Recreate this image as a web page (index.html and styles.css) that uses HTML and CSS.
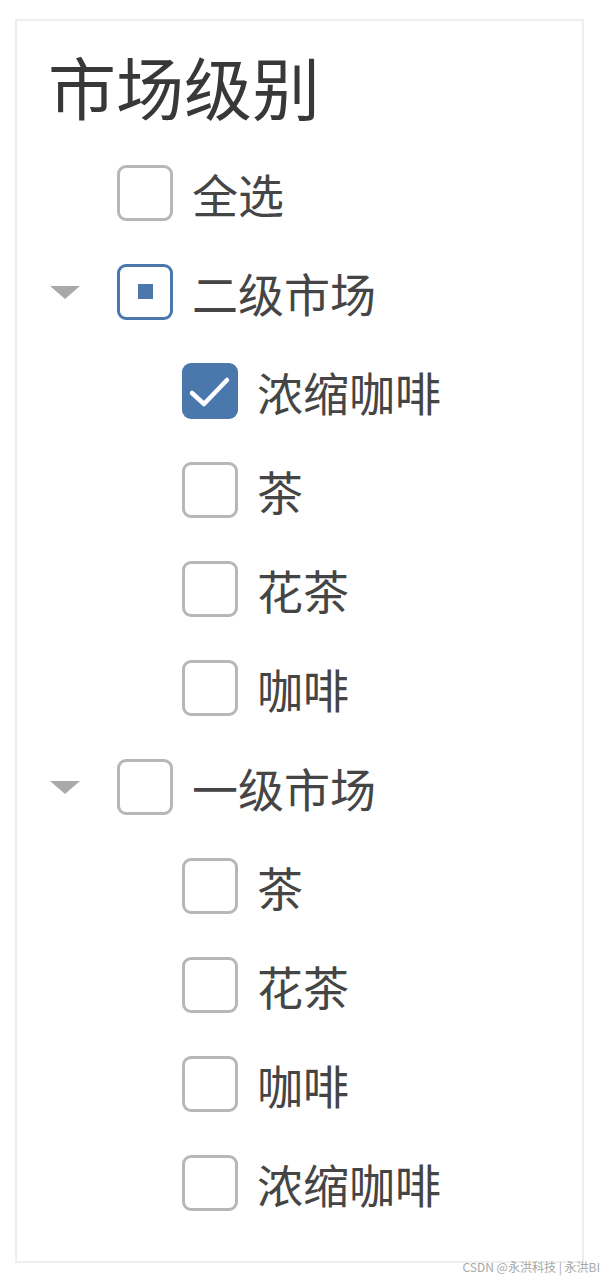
FILE: index.html
```html
<!DOCTYPE html>
<html lang="zh-CN">
<head>
<meta charset="utf-8">
<title>市场级别</title>
<link rel="stylesheet" href="styles.css">
</head>
<body>
<div class="panel">
  <div class="title">市场级别</div>
  <ul class="tree">
    <li class="row">
      <span class="toggle"></span>
      <span class="box"></span>
      <span class="label">全选</span>
    </li>
    <li class="row">
      <span class="toggle"><svg width="34" height="16" viewBox="0 0 34 16"><polygon points="2,2 32,2 17,15" fill="#a9a9a9"/></svg></span>
      <span class="box partial"><span class="dot"></span></span>
      <span class="label">二级市场</span>
    </li>
    <li class="row child">
      <span class="box checked"><svg width="56" height="56" viewBox="0 0 56 56"><polyline points="10,30 22,41 45,17" fill="none" stroke="#fff" stroke-width="4.5" stroke-linecap="round" stroke-linejoin="round"/></svg></span>
      <span class="label">浓缩咖啡</span>
    </li>
    <li class="row child">
      <span class="box"></span>
      <span class="label">茶</span>
    </li>
    <li class="row child">
      <span class="box"></span>
      <span class="label">花茶</span>
    </li>
    <li class="row child">
      <span class="box"></span>
      <span class="label">咖啡</span>
    </li>
    <li class="row">
      <span class="toggle"><svg width="34" height="16" viewBox="0 0 34 16"><polygon points="2,2 32,2 17,15" fill="#a9a9a9"/></svg></span>
      <span class="box"></span>
      <span class="label">一级市场</span>
    </li>
    <li class="row child">
      <span class="box"></span>
      <span class="label">茶</span>
    </li>
    <li class="row child">
      <span class="box"></span>
      <span class="label">花茶</span>
    </li>
    <li class="row child">
      <span class="box"></span>
      <span class="label">咖啡</span>
    </li>
    <li class="row child">
      <span class="box"></span>
      <span class="label">浓缩咖啡</span>
    </li>
  </ul>
</div>
<div class="watermark">CSDN @永洪科技 | 永洪BI</div>
</body>
</html>
```

FILE: styles.css
```css
html, body {
  margin: 0;
  padding: 0;
  background: #ffffff;
}

body {
  position: relative;
  width: 606px;
  height: 1280px;
  font-family: "Noto Sans CJK SC", "Noto Sans", sans-serif;
  color: #444444;
}

.panel {
  box-sizing: border-box;
  margin: 19px 0 0 15px;
  width: 569px;
  height: 1244px;
  border: 2px solid #eeeeee;
  padding: 25px 0 0 31px;
}

.title {
  font-size: 68px;
  line-height: 80px;
  height: 80px;
  color: #383838;
  margin-bottom: 17px;
}

.tree {
  list-style: none;
  margin: 0;
  padding: 0;
}

.row {
  display: flex;
  align-items: center;
  height: 99px;
}

.row.child {
  padding-left: 134px;
}

.toggle {
  display: flex;
  align-items: center;
  width: 69px;
  height: 16px;
  flex: none;
}

.toggle svg {
  display: block;
}

.box {
  box-sizing: border-box;
  flex: none;
  width: 56px;
  height: 56px;
  border: 3px solid #b7b7b7;
  border-radius: 9px;
  background: #ffffff;
  display: flex;
  align-items: center;
  justify-content: center;
}

.box.partial {
  border-color: #4a78ad;
}

.box .dot {
  width: 15px;
  height: 15px;
  background: #4a78ad;
}

.box.checked {
  border: none;
  background: #4a78ad;
}

.box.checked svg {
  display: block;
}

.label {
  margin-left: 19px;
  font-size: 46px;
  line-height: 56px;
  color: #454545;
  white-space: nowrap;
}

.watermark {
  position: absolute;
  right: 6px;
  bottom: 6px;
  font-size: 12px;
  line-height: 14px;
  color: #a8a8a8;
  white-space: nowrap;
}
```
